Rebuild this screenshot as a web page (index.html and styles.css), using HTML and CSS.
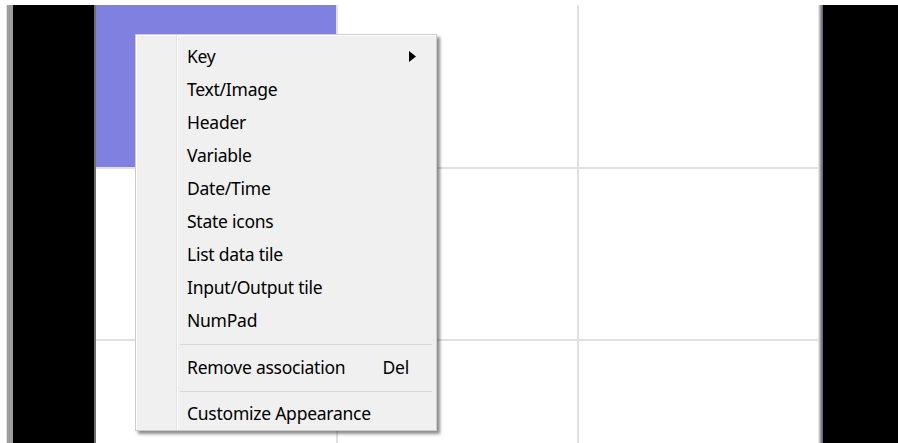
FILE: index.html
```html
<!DOCTYPE html>
<html lang="en">
<head>
<meta charset="utf-8">
<title>Screen layout editor</title>
<link rel="stylesheet" href="styles.css">
</head>
<body>
<div class="screen">
  <div class="rail"></div>
  <div class="panel panel-left"></div>
  <div class="board">
    <div class="cell cell-selected"></div>
    <div class="cell"></div>
    <div class="cell"></div>
    <div class="cell"></div>
    <div class="cell"></div>
    <div class="cell"></div>
    <div class="cell"></div>
    <div class="cell"></div>
    <div class="cell"></div>
  </div>
  <div class="edge"></div>
  <div class="panel panel-right"></div>

  <div class="context-menu">
    <div class="gutter"></div>
    <ul class="items">
      <li class="item item-sub">
        <span>Key</span>
        <svg class="arrow" width="7" height="11" viewBox="0 0 7 11"><path d="M0 0 L7 5.5 L0 11 Z" fill="#000"/></svg>
      </li>
      <li class="item"><span>Text/Image</span></li>
      <li class="item"><span>Header</span></li>
      <li class="item"><span>Variable</span></li>
      <li class="item"><span>Date/Time</span></li>
      <li class="item"><span>State icons</span></li>
      <li class="item"><span>List data tile</span></li>
      <li class="item"><span>Input/Output tile</span></li>
      <li class="item"><span>NumPad</span></li>
      <li class="separator"></li>
      <li class="item item-shortcut"><span>Remove association</span><span class="shortcut">Del</span></li>
      <li class="separator separator-last"></li>
      <li class="item"><span>Customize Appearance</span></li>
    </ul>
  </div>
</div>
</body>
</html>
```

FILE: styles.css
```css
html, body {
  margin: 0;
  padding: 0;
  background: #ffffff;
}

.screen {
  position: relative;
  display: flex;
  width: 898px;
  height: 443px;
  padding-top: 5px;
  box-sizing: border-box;
  overflow: hidden;
  background: #ffffff;
  font-family: "Segoe UI", "Noto Sans", "Open Sans", sans-serif;
}

/* grey window border on the far left */
.rail {
  margin-left: 6px;
  width: 6px;
  border-left: 1px solid #e2e2e2;
  background: #9d9d9d;
}

.panel {
  background: #000000;
}

.panel-left {
  width: 81px;
  border-right: 2px solid #6f6f6f;
}

.panel-right {
  flex: 1;
}

/* 3 x 3 tile board */
.board {
  display: grid;
  grid-template-columns: 240px 239px 239px;
  grid-template-rows: 162px 170px 1fr;
  gap: 2px;
  width: 722px;
  background: #e0e0e0;
  border-right: 1px solid #e6e6e6;
}

.cell {
  background: #ffffff;
}

.cell-selected {
  background: #8080e0;
}

.edge {
  width: 4px;
  background: linear-gradient(to right, #d4d4d4, #8a8a96 50%, #5c5c68);
}

/* right-click menu */
.context-menu {
  position: absolute;
  left: 135px;
  top: 34px;
  width: 302px;
  display: flex;
  box-sizing: border-box;
  border: 1px solid #cccccc;
  background: #f0f0f0;
  box-shadow: inset 1px 1px 0 #ffffff, 3px 3px 3px rgba(0, 0, 0, 0.45);
}

.gutter {
  width: 40px;
  border-right: 1px solid #e2e2e2;
}

.items {
  flex: 1;
  margin: 0;
  padding: 5px 0 0 0;
  list-style: none;
  border-left: 1px solid #ffffff;
}

.item {
  display: flex;
  align-items: center;
  justify-content: space-between;
  height: 33px;
  padding: 0 27px 0 9px;
  font-size: 17.5px;
  letter-spacing: -0.25px;
  line-height: 33px;
  color: #000000;
  white-space: nowrap;
}

.item-sub {
  padding-right: 20px;
}

.arrow {
  display: block;
}

.separator {
  height: 0;
  margin: 7px 4px 6px 2px;
  border-top: 1px solid #d7d7d7;
}

.separator-last {
  margin-bottom: 5px;
}
```
